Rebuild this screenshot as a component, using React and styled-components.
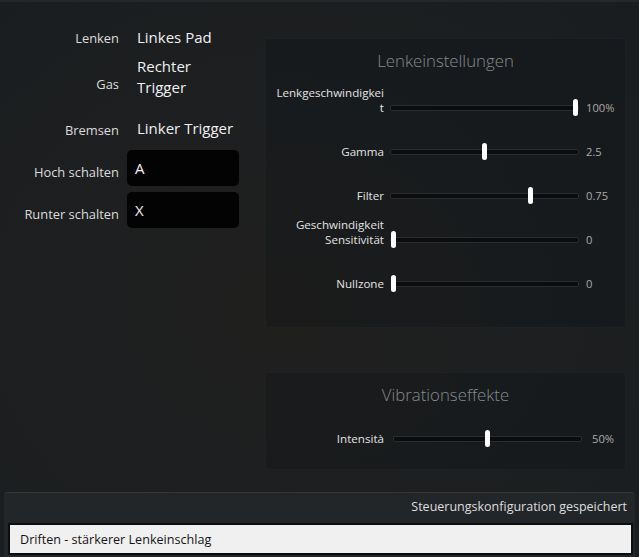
import React from 'react';
import styled, { createGlobalStyle } from 'styled-components';

const GlobalStyle = createGlobalStyle`
  html, body {
    margin: 0;
    padding: 0;
    background: #1c1e20;
  }
  * {
    box-sizing: border-box;
  }
`;

const bindings = [
  { label: 'Lenken', value: 'Linkes Pad', top: 25, h: 24, shift: 2 },
  { label: 'Gas', value: 'Rechter Trigger', top: 6, h: 44, shift: 14 },
  { label: 'Bremsen', value: 'Linker Trigger', top: 17, h: 24, shift: 4 },
  { label: 'Hoch schalten', key: 'A', top: 10, h: 36, shift: 8 },
  { label: 'Runter schalten', key: 'X', top: 6, h: 36, shift: 8 },
];

const steering = [
  { lines: ['Lenkgeschwindigkei', 't'], pct: 1, value: '100%' },
  { lines: ['Gamma'], pct: 0.5, value: '2.5' },
  { lines: ['Filter'], pct: 0.75, value: '0.75' },
  { lines: ['Geschwindigkeit', 'Sensitivität'], pct: 0, value: '0' },
  { lines: ['Nullzone'], pct: 0, value: '0' },
];

const Slider = ({ pct }) => (
  <TrackSlot>
    <Track>
      <Thumb style={{ left: `calc(${pct} * (100% - 5px))` }} />
    </Track>
  </TrackSlot>
);

const SliderRow = ({ lines, pct, value, h, gap }) => (
  <Row $h={h} $gap={gap}>
    <SliderLabel>
      {lines.map((l) => (
        <span key={l}>{l}</span>
      ))}
    </SliderLabel>
    <Slider pct={pct} />
    <SliderValue>{value}</SliderValue>
  </Row>
);

const App = () => {
  return (
    <Window>
      <GlobalStyle />
      <Main>
        <MappingForm>
          {bindings.map((b) => (
            <FieldRow key={b.label} $top={b.top} $h={b.h}>
              <FieldLabel $shift={b.shift}>{b.label}</FieldLabel>
              {b.key ? <KeyBox>{b.key}</KeyBox> : <FieldValue>{b.value}</FieldValue>}
            </FieldRow>
          ))}
        </MappingForm>

        <Settings>
          <GroupBox $h={290}>
            <GroupTitle>Lenkeinstellungen</GroupTitle>
            {steering.map((s) => (
              <SliderRow key={s.lines.join()} {...s} h={44} gap={6} />
            ))}
          </GroupBox>

          <GroupBox $h={98}>
            <GroupTitle>Vibrationseffekte</GroupTitle>
            <SliderRow lines={['Intensità']} pct={0.5} value="50%" h={41} gap={9} />
          </GroupBox>
        </Settings>
      </Main>

      <StatusPanel>
        <StatusText>Steuerungskonfiguration gespeichert</StatusText>
        <InputFrame>
          <CommandInput readOnly value="Driften - stärkerer Lenkeinschlag" />
        </InputFrame>
      </StatusPanel>
    </Window>
  );
};

const Window = styled.div`
  height: 557px;
  width: 639px;
  overflow: hidden;
  display: flex;
  flex-direction: column;
  border-top: 2px solid #25282a;
  background: radial-gradient(ellipse at 45% 55%, #201f1e 0%, #1d1f20 45%, #1a1d20 100%);
  font-family: 'Open Sans', 'Noto Sans', sans-serif;
  color: #e6e6e6;
`;

const Main = styled.div`
  flex: 1;
  display: flex;
  margin-top: -2px;
`;

const MappingForm = styled.div`
  width: 265px;
  display: flex;
  flex-direction: column;
`;

const FieldRow = styled.div`
  display: flex;
  gap: 8px;
  align-items: center;
  margin-top: ${(p) => p.$top}px;
  height: ${(p) => p.$h}px;
`;

const FieldLabel = styled.div`
  width: 119px;
  text-align: right;
  font-size: 12.9px;
  color: #dcdcdc;
  padding-top: ${(p) => p.$shift}px;
  line-height: 16px;
  white-space: nowrap;
`;

const FieldValue = styled.div`
  width: 112px;
  padding: 0 2px 0 10px;
  font-size: 15px;
  line-height: 21px;
  color: #f0f0f0;
`;

const KeyBox = styled.div`
  width: 112px;
  height: 36px;
  background: #030303;
  border-radius: 5px;
  padding-left: 8px;
  display: flex;
  align-items: center;
  font-size: 15px;
  color: #f2f2f2;
`;

const Settings = styled.div`
  width: 361px;
  padding-top: 38px;
  display: flex;
  flex-direction: column;
  gap: 44px;
`;

const GroupBox = styled.div`
  height: ${(p) => p.$h}px;
  background: rgba(8, 12, 16, 0.18);
  border: 1px solid rgba(255, 255, 255, 0.03);
  border-radius: 4px;
  padding-top: 11px;
`;

const GroupTitle = styled.div`
  height: 21px;
  line-height: 21px;
  text-align: center;
  font-size: 16.8px;
  font-weight: 300;
  color: #868a8e;
`;

const Row = styled.div`
  height: ${(p) => p.$h}px;
  display: grid;
  grid-template-columns: 118px 189px auto;
  column-gap: ${(p) => p.$gap}px;
  align-items: end;
`;

const SliderLabel = styled.div`
  display: flex;
  flex-direction: column;
  align-items: flex-end;
  font-size: 11.6px;
  line-height: 15px;
  color: #e2e2e2;
  white-space: nowrap;
`;

const TrackSlot = styled.div`
  height: 15px;
  display: flex;
  align-items: center;
`;

const Track = styled.div`
  position: relative;
  width: 100%;
  height: 6px;
  background: #0a0c0e;
  border: 1px solid #2a2d30;
  border-radius: 2px;
`;

const Thumb = styled.div`
  position: absolute;
  top: 50%;
  width: 5px;
  height: 17px;
  margin-top: -8.5px;
  background: #ffffff;
  border-radius: 3px;
`;

const SliderValue = styled.div`
  font-size: 11.2px;
  line-height: 15px;
  color: #a9a9a9;
  padding-left: 1px;
`;

const StatusPanel = styled.div`
  height: 65px;
  margin: 0 4px;
  background: #232629;
  border-top: 1px solid #34373a;
  border-radius: 4px 4px 0 0;
  padding-top: 6px;
`;

const StatusText = styled.div`
  text-align: right;
  padding-right: 8px;
  font-size: 12.5px;
  line-height: 16px;
  color: #dedede;
`;

const InputFrame = styled.div`
  margin: 8px 2px 0 4px;
  border: 2px solid #0c0d0e;
`;

const CommandInput = styled.input`
  display: block;
  width: 100%;
  height: 28px;
  border: none;
  outline: none;
  background: #f0f0f0;
  padding: 0 10px;
  font-family: 'Open Sans', 'Noto Sans', sans-serif;
  font-size: 12.6px;
  color: #141414;
`;

export default App;
